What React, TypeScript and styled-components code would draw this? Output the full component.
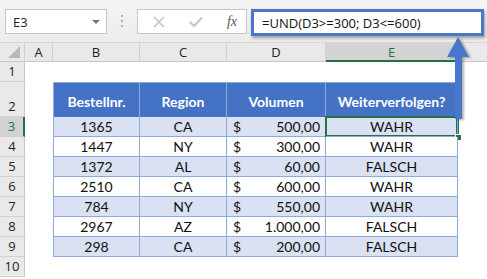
import React from "react";
import styled, { createGlobalStyle } from "styled-components";

const GREEN = "#217346";
const BLUE = "#4472C4";
const LINE = "#8EA9DB";

const rows = [
  { nr: "1365", region: "CA", vol: "500,00", ok: "WAHR" },
  { nr: "1447", region: "NY", vol: "300,00", ok: "WAHR" },
  { nr: "1372", region: "AL", vol: "60,00", ok: "FALSCH" },
  { nr: "2510", region: "CA", vol: "600,00", ok: "WAHR" },
  { nr: "784", region: "NY", vol: "550,00", ok: "WAHR" },
  { nr: "2967", region: "AZ", vol: "1.000,00", ok: "FALSCH" },
  { nr: "298", region: "CA", vol: "200,00", ok: "FALSCH" },
];

const columns = ["A", "B", "C", "D", "E", ""];

export default function App() {
  return (
    <Page>
      <GlobalStyle />
      <TopBar>
        <NameBox>
          <span>E3</span>
          <DropArrow />
        </NameBox>
        <Grip>
          <i />
          <i />
          <i />
        </Grip>
        <ButtonBox>
          <svg width="12" height="12" viewBox="0 0 12 12">
            <path d="M1 1 L11 11 M11 1 L1 11" stroke="#c4c4c4" strokeWidth="1.6" />
          </svg>
          <svg width="14" height="12" viewBox="0 0 14 12">
            <path d="M1 6 L5 10 L13 1.5" stroke="#c4c4c4" strokeWidth="2" fill="none" />
          </svg>
          <Fx>fx</Fx>
        </ButtonBox>
        <FormulaBox>=UND(D3&gt;=300; D3&lt;=600)</FormulaBox>
      </TopBar>
      <Sheet>
        <Corner>
          <svg width="14" height="14" viewBox="0 0 14 14">
            <path d="M13 1 L13 13 L1 13 Z" fill="#b8b8b8" />
          </svg>
        </Corner>
        {columns.map((c, i) => (
          <ColHeader key={i} active={c === "E"} last={c === ""}>
            {c}
          </ColHeader>
        ))}

        <RowHeader>1</RowHeader>
        <Blank span={6} />

        <RowHeader>2</RowHeader>
        <Blank />
        <HeadCell first>Bestellnr.</HeadCell>
        <HeadCell>Region</HeadCell>
        <HeadCell>Volumen</HeadCell>
        <HeadCell>Weiterverfolgen?</HeadCell>
        <Blank />

        {rows.map((r, i) => (
          <React.Fragment key={r.nr}>
            <RowHeader active={i === 0}>{i + 3}</RowHeader>
            <Blank />
            <DataCell first band={i % 2 === 0}>
              {r.nr}
            </DataCell>
            <DataCell band={i % 2 === 0}>{r.region}</DataCell>
            <MoneyCell band={i % 2 === 0}>
              <span>$</span>
              <span>{r.vol}</span>
            </MoneyCell>
            <DataCell band={i % 2 === 0} selected={i === 0}>
              {r.ok}
            </DataCell>
            <Blank />
          </React.Fragment>
        ))}

        <RowHeader>10</RowHeader>
        <Blank span={6} />
      </Sheet>
      <Arrow width="30" height="90" viewBox="0 0 30 90">
        <path d="M14 2 L25 22 L18 22 L18 84 L11 84 L11 22 L3 22 Z" fill="#4876CB" />
      </Arrow>
    </Page>
  );
}

const GlobalStyle = createGlobalStyle`
  html, body {
    margin: 0;
    padding: 0;
    background: #fff;
  }
  body {
    width: 487px;
    height: 279px;
    overflow: hidden;
    font-family: "Open Sans", "Liberation Sans", sans-serif;
  }
`;

const Page = styled.div`
  position: relative;
  width: 487px;
  height: 279px;
  overflow: hidden;
`;

const TopBar = styled.div`
  display: flex;
  align-items: flex-start;
  height: 43px;
  box-sizing: border-box;
  padding: 9px 0 0 5px;
  background: linear-gradient(#f4f4f4, #ececec);
  border-bottom: 1px solid #d6d6d6;
`;

const NameBox = styled.div`
  display: flex;
  align-items: center;
  justify-content: space-between;
  box-sizing: border-box;
  width: 102px;
  height: 25px;
  padding: 0 6px 0 7px;
  background: #fff;
  border: 1px solid #c6c6c6;
  font-size: 13px;
  color: #222;
`;

const DropArrow = styled.div`
  width: 0;
  height: 0;
  border-left: 4px solid transparent;
  border-right: 4px solid transparent;
  border-top: 4px solid #777;
`;

const Grip = styled.div`
  display: flex;
  flex-direction: column;
  align-items: center;
  gap: 3px;
  width: 30px;
  padding-top: 6px;

  i {
    width: 2px;
    height: 2px;
    background: #b0b0b0;
  }
`;

const ButtonBox = styled.div`
  display: flex;
  align-items: center;
  justify-content: space-between;
  box-sizing: border-box;
  width: 110px;
  height: 25px;
  padding: 0 9px 0 15px;
  background: #fff;
  border: 1px solid #c6c6c6;
`;

const Fx = styled.span`
  font-family: "Liberation Serif", serif;
  font-style: italic;
  font-size: 14px;
  color: #555;
`;

const FormulaBox = styled.div`
  display: flex;
  align-items: center;
  box-sizing: border-box;
  width: 233px;
  height: 27px;
  margin-left: 4px;
  padding-left: 8px;
  background: #fff;
  border: 3px solid #4A77C7;
  box-shadow: 1px 2px 3px rgba(0, 0, 0, 0.35);
  font-size: 13px;
  color: #111;
`;

const Sheet = styled.div`
  display: grid;
  grid-template-columns: 25px 28px 87px 87px 99px 132px 1fr;
  grid-template-rows: 19px 20px 35px repeat(8, 20px);
  font-family: "Lato", "Open Sans", sans-serif;
  font-size: 14px;
  color: #111;
`;

const Corner = styled.div`
  display: flex;
  align-items: flex-end;
  justify-content: flex-end;
  padding: 0 3px 2px 0;
  background: #e9e9e9;
  border-right: 1px solid #d0d0d0;
  border-bottom: 1px solid #c8c8c8;
`;

const ColHeader = styled.div<{ active?: boolean; last?: boolean }>`
  display: flex;
  align-items: center;
  justify-content: center;
  box-sizing: border-box;
  background: ${(p) => (p.active ? "#d3d3d3" : "#e9e9e9")};
  border-right: ${(p) => (p.last ? "none" : "1px solid #d0d0d0")};
  border-bottom: ${(p) => (p.active ? `2px solid ${GREEN}` : "1px solid #c8c8c8")};
  font-family: "Open Sans", sans-serif;
  font-size: 13px;
  color: ${(p) => (p.active ? GREEN : "#222")};
`;

const RowHeader = styled.div<{ active?: boolean }>`
  display: flex;
  align-items: flex-end;
  justify-content: center;
  box-sizing: border-box;
  padding-bottom: 1px;
  background: ${(p) => (p.active ? "#d3d3d3" : "#e9e9e9")};
  border-right: ${(p) => (p.active ? `2px solid ${GREEN}` : "1px solid #c8c8c8")};
  border-bottom: 1px solid #d0d0d0;
  font-family: "Open Sans", sans-serif;
  font-size: 13px;
  color: ${(p) => (p.active ? GREEN : "#222")};
`;

const Blank = styled.div<{ span?: number }>`
  grid-column: span ${(p) => p.span || 1};
  background: #fff;
`;

const HeadCell = styled.div<{ first?: boolean }>`
  display: flex;
  align-items: center;
  justify-content: center;
  box-sizing: border-box;
  padding-top: 3px;
  background: ${BLUE};
  color: #fff;
  font-weight: 700;
  border-top: 1px solid ${LINE};
  border-right: 1px solid ${LINE};
  border-left: ${(p) => (p.first ? `1px solid ${LINE}` : "none")};
`;

const DataCell = styled.div<{ first?: boolean; band?: boolean; selected?: boolean }>`
  position: relative;
  display: flex;
  align-items: center;
  justify-content: center;
  box-sizing: border-box;
  background: ${(p) => (p.band ? "#D9E1F2" : "#fff")};
  border-right: 1px solid ${LINE};
  border-bottom: 1px solid ${LINE};
  border-left: ${(p) => (p.first ? `1px solid ${LINE}` : "none")};
  box-shadow: ${(p) => (p.selected ? `0 0 0 1px ${GREEN}, inset 0 0 0 1px ${GREEN}` : "none")};

  &::after {
    content: "";
    display: ${(p) => (p.selected ? "block" : "none")};
    position: absolute;
    right: -4px;
    bottom: -4px;
    width: 5px;
    height: 5px;
    background: ${GREEN};
    border: 1px solid #fff;
    border-width: 1px 0 0 1px;
  }
`;

const MoneyCell = styled(DataCell)`
  justify-content: space-between;
  padding: 0 5px 0 6px;
`;

const Arrow = styled.svg`
  position: absolute;
  left: 444px;
  top: 35px;
  filter: drop-shadow(2px 1px 1px rgba(0, 0, 0, 0.3));
`;
